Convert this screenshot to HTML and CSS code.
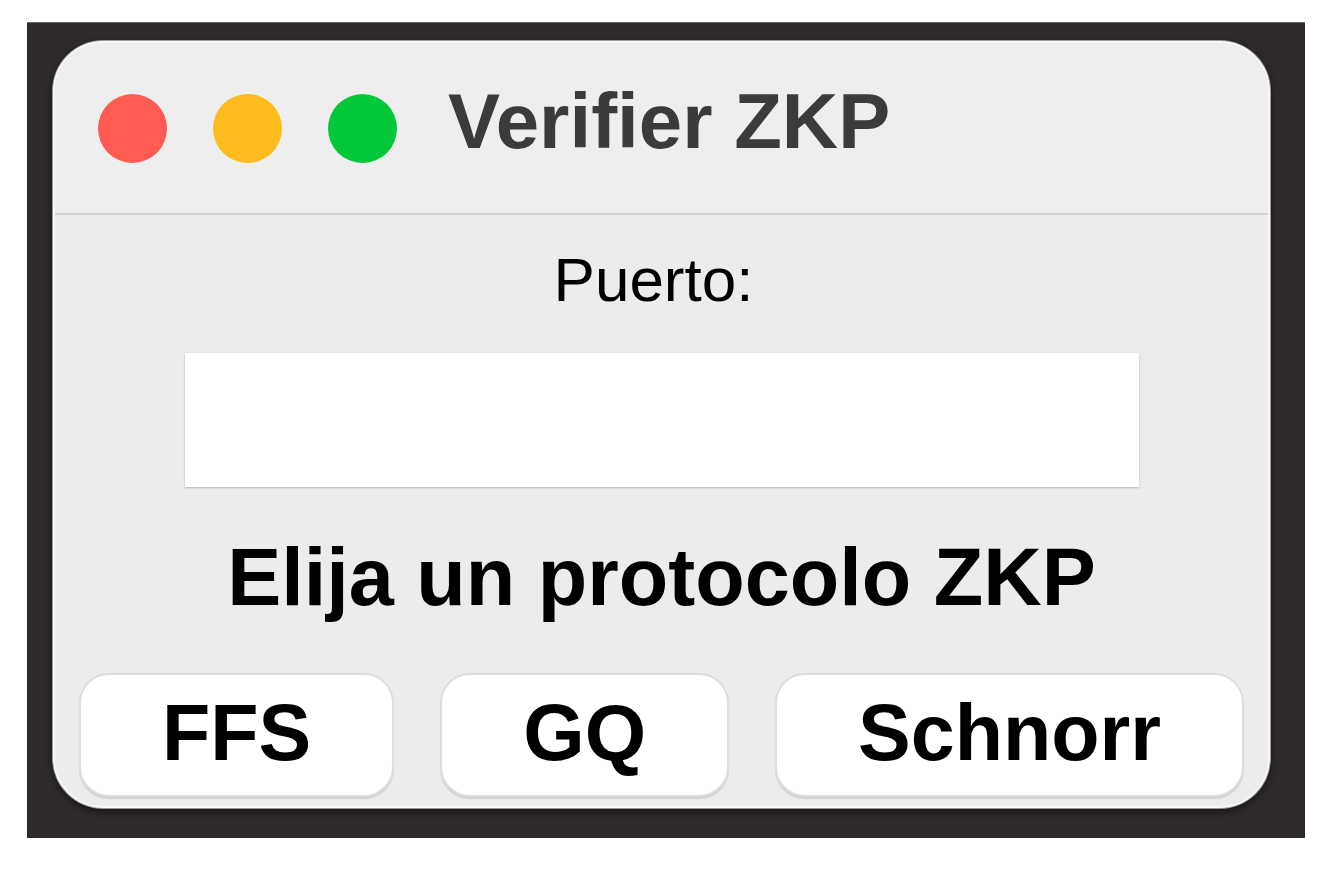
FILE: index.html
```html
<!DOCTYPE html>
<html>
<head>
    <title>Verifier ZKP</title>
    <link rel="stylesheet" href="styles.css">
</head>
<body>
    <div class="frame">
        <div class="window">
            <div class="titlebar">
                <span class="light light-close"></span>
                <span class="light light-min"></span>
                <span class="light light-max"></span>
                <h1 class="title">Verifier ZKP</h1>
            </div>

            <div class="content">
                <label class="port-label" for="port">Puerto:</label>
                <input type="text" id="port" class="port-input">

                <h2 class="prompt">Elija un protocolo ZKP</h2>

                <div class="protocols">
                    <button class="protocol-btn">FFS</button>
                    <button class="protocol-btn">GQ</button>
                    <button class="protocol-btn">Schnorr</button>
                </div>
            </div>
        </div>
    </div>
</body>
</html>
```

FILE: styles.css
```css
body {
    margin: 0;
    background: #fff;
    font-family: "Liberation Sans", Arial, sans-serif;
}
.frame {
    box-sizing: border-box;
    width: 1278px;
    height: 816px;
    margin: 22px 0 0 27px;
    padding: 18px 35px 30px 26px;
    background: #2e2a2b;
    border-top: 1px solid #6b6869;
}
.window {
    box-sizing: border-box;
    width: 100%;
    height: 100%;
    display: flex;
    flex-direction: column;
    background: #ececec;
    border: 2px solid #f8f8f8;
    border-radius: 50px;
    box-shadow: 0 0 0 1px #9a9898, 0 3px 8px rgba(0, 0, 0, 0.6);
    overflow: hidden;
}
.titlebar {
    height: 170px;
    display: flex;
    align-items: center;
    gap: 46px;
    padding-left: 43px;
    background: #eeeeee;
    border-bottom: 2px solid #d2d2d2;
}
.light {
    width: 69px;
    height: 69px;
    border-radius: 50%;
    flex: none;
}
.light-close { background: #fe5b53; }
.light-min { background: #febb1d; }
.light-max { background: #03c83a; }
.title {
    margin: 0 0 14px 5px;
    font-size: 78px;
    line-height: 1;
    font-weight: bold;
    color: #3b3b3b;
}
.content {
    display: flex;
    flex-direction: column;
    align-items: center;
    padding-top: 34px;
}
.port-label {
    margin-right: 16px;
    font-size: 62px;
    line-height: 1;
    color: #000;
}
.port-input {
    box-sizing: border-box;
    width: 954px;
    height: 134px;
    margin-top: 42px;
    border: none;
    background: #fff;
    box-shadow: 0 1px 2px rgba(0, 0, 0, 0.22);
}
.prompt {
    margin: 50px 0 0;
    font-size: 81px;
    line-height: 1;
    font-weight: bold;
    color: #000;
}
.protocols {
    display: flex;
    gap: 46px;
    margin-top: 55px;
}
.protocol-btn {
    box-sizing: border-box;
    height: 124px;
    padding: 0 81px 6px;
    font-family: inherit;
    font-size: 79px;
    line-height: 1;
    font-weight: bold;
    color: #000;
    background: #fff;
    border: 2px solid #dedede;
    border-radius: 30px;
    box-shadow: 0 2px 1px rgba(0, 0, 0, 0.12);
}
```
